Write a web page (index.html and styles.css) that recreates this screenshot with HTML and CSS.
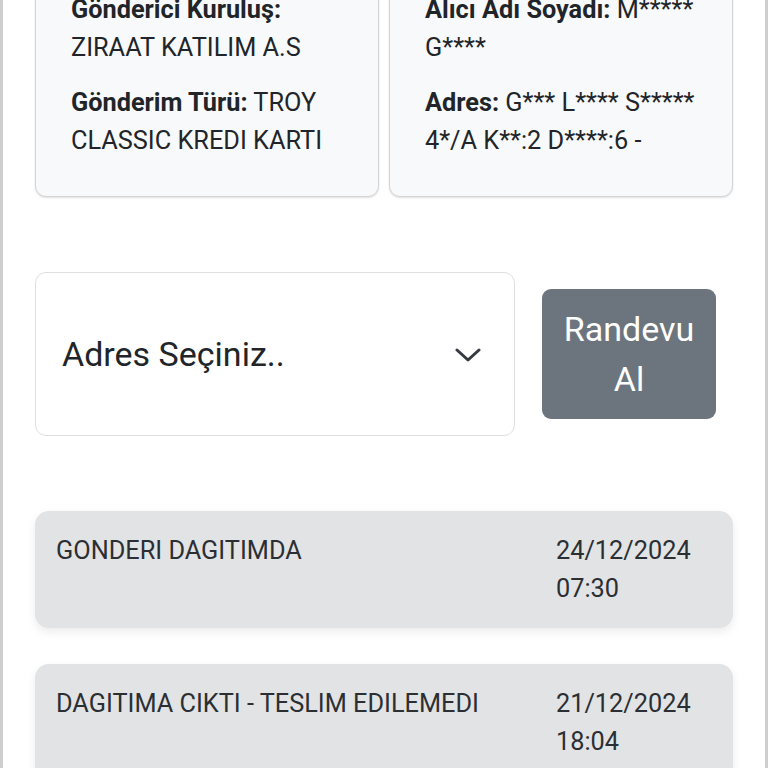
FILE: index.html
```html
<!DOCTYPE html>
<html lang="tr">
<head>
<meta charset="utf-8">
<title>Gönderi Takip</title>
<link rel="stylesheet" href="styles.css">
</head>
<body>
<div class="page">
  <div class="content">
    <div class="info-row">
      <div class="info-card">
        <p><b>Gönderici Kuruluş:</b> ZIRAAT KATILIM A.S</p>
        <p><b>Gönderim Türü:</b> TROY CLASSIC KREDI KARTI</p>
      </div>
      <div class="info-card">
        <p><b>Alıcı Adı Soyadı:</b> M***** G****</p>
        <p><b>Adres:</b> G*** L**** S***** 4*/A K**:2 D****:6 -</p>
      </div>
    </div>

    <div class="form-row">
      <div class="select">
        <span class="select-text">Adres Seçiniz..</span>
        <svg class="chevron" width="26" height="14" viewBox="0 0 26 14" aria-hidden="true">
          <path d="M2 2 L13 12 L24 2" fill="none" stroke="#343a40" stroke-width="3" stroke-linecap="round" stroke-linejoin="round"/>
        </svg>
      </div>
      <button class="btn">Randevu Al</button>
    </div>

    <div class="timeline">
      <div class="event">
        <div class="event-desc">GONDERI DAGITIMDA</div>
        <div class="event-date">24/12/2024 07:30</div>
      </div>
      <div class="event">
        <div class="event-desc">DAGITIMA CIKTI - TESLIM EDILEMEDI</div>
        <div class="event-date">21/12/2024 18:04</div>
      </div>
    </div>
  </div>
</div>
</body>
</html>
```

FILE: styles.css
```css
html, body {
  margin: 0;
  padding: 0;
  background: #ffffff;
}

body {
  font-family: Roboto, "Liberation Sans", sans-serif;
  color: #212529;
  overflow: hidden;
}

.page {
  width: 768px;
  min-height: 768px;
  box-sizing: border-box;
  border-left: 3px solid #cfcfcf;
  border-right: 3px solid #cfcfcf;
  overflow: hidden;
}

.content {
  padding: 0 32px;
}

.info-row {
  display: grid;
  grid-template-columns: 344px 344px;
  gap: 10px;
  margin-top: -44px;
}

.info-card {
  background: #f8f9fa;
  border: 1px solid #d3d4d6;
  border-radius: 11px;
  box-shadow: 0 1px 2px rgba(0, 0, 0, 0.12);
  padding: 34px 24px 36px 35px;
  font-size: 25.3px;
  line-height: 38px;
  color: #212529;
}

.info-card p {
  margin: 0 0 17px 0;
}

.info-card p:last-child {
  margin-bottom: 0;
}

.info-card b {
  font-weight: 700;
}

.form-row {
  margin-top: 75px;
  display: flex;
  align-items: center;
  gap: 27px;
}

.select {
  width: 480px;
  height: 164px;
  box-sizing: border-box;
  border: 1px solid #dcdfe2;
  border-radius: 11px;
  background: #ffffff;
  display: flex;
  align-items: center;
  justify-content: space-between;
  padding: 0 33px 0 26px;
}

.select-text {
  font-size: 34px;
  line-height: 50px;
  color: #212529;
}

.chevron {
  display: block;
  margin-top: 2px;
}

.btn {
  width: 174px;
  height: 130px;
  border: none;
  border-radius: 9px;
  background: #6c757d;
  color: #ffffff;
  font-family: Roboto, "Liberation Sans", sans-serif;
  font-size: 34px;
  line-height: 50px;
  padding: 15px 10px;
  text-align: center;
}

.timeline {
  margin-top: 75px;
  display: flex;
  flex-direction: column;
  gap: 36px;
}

.event {
  background: #e2e3e5;
  border-radius: 14px;
  box-shadow: 0 4px 10px rgba(0, 0, 0, 0.08);
  padding: 21px 21px 20px 21px;
  display: grid;
  grid-template-columns: 500px 1fr;
  font-size: 25.3px;
  line-height: 38px;
  color: #2b2f33;
}

.event-date {
  width: 150px;
}
```
